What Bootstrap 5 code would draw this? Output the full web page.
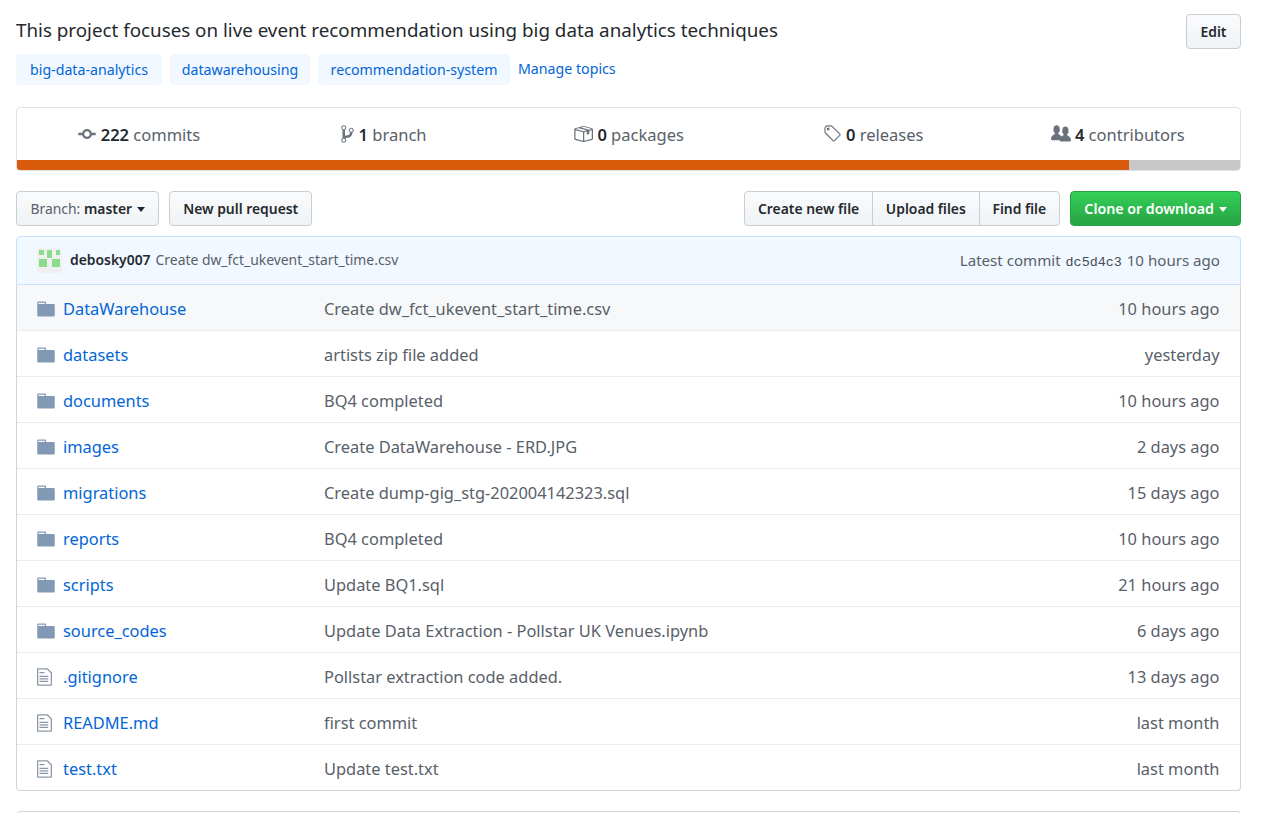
<!DOCTYPE html>
<html lang="en">
<head>
    <meta charset="UTF-8">
    <meta name="viewport" content="width=device-width, initial-scale=1.0">
    <title>Repository</title>
    <link href="https://cdn.jsdelivr.net/npm/bootstrap@5.3.0/dist/css/bootstrap.min.css" rel="stylesheet">
    <style>
        body {
            font-family: "Noto Sans", "Open Sans", sans-serif;
            color: #24292e;
            background: #fff;
            overflow: hidden;
        }
        a { text-decoration: none; color: #0366d6; }
        .repo-wrap { padding: 14px 20px 0 16px; }
        .repo-desc { font-size: 18.8px; line-height: 33px; height: 35px; }
        .gh-btn {
            font-size: 13.9px;
            font-weight: 600;
            line-height: 33px;
            height: 35px;
            padding: 0 13.5px;
            border: 1px solid #c9ccd1;
            border-radius: 4px;
            color: #24292e;
            background: linear-gradient(#fafbfc, #eff3f6);
            white-space: nowrap;
        }
        .gh-btn:hover { color: #24292e; }
        .gh-btn .muted-lbl { font-weight: 400; color: #586069; }
        .gh-pr { margin-left: 10px; padding: 0 13px; }
        .gh-group .gh-btn { border-radius: 0; margin-left: -1px; padding: 0 12.8px; }
        .gh-group .gh-btn:first-child { border-radius: 4px 0 0 4px; margin-left: 0; }
        .gh-group .gh-btn:last-child { border-radius: 0 4px 4px 0; }
        .gh-green {
            color: #fff;
            font-size: 14.2px;
            border-color: #279f43;
            background: linear-gradient(#34d058, #28a745 90%);
            margin-left: 10px;
            padding: 0 13.4px;
        }
        .gh-green:hover { color: #fff; }
        .caret {
            display: inline-block;
            margin-left: 1px;
            vertical-align: 2px;
            border-top: 5px solid currentColor;
            border-left: 4.5px solid transparent;
            border-right: 4.5px solid transparent;
        }
        .topic-row { margin-top: 5px; height: 31px; gap: 8px; }
        .topic-pill {
            display: block;
            font-size: 14.2px;
            line-height: 31px;
            text-align: center;
            background: #f1f8ff;
            border-radius: 4px;
        }
        .pill-a { width: 146px; }
        .pill-b { width: 140px; }
        .pill-c { width: 192px; }
        .manage-link { font-size: 14.2px; line-height: 29px; color: #0366d6; }
        .stats-box {
            margin-top: 22px;
            height: 64px;
            border: 1px solid #dfe2e5;
            border-radius: 4px;
            overflow: hidden;
        }
        .stat-line { height: 52px; }
        .stat-item {
            flex: 1 1 0;
            font-size: 16.5px;
            color: #586069;
            text-align: center;
            line-height: 54px;
            white-space: nowrap;
        }
        .stat-item b { font-weight: 600; color: #24292e; }
        .stat-item svg { fill: #6a737d; vertical-align: -3px; }
        .lang-bar { height: 10px; background: #c8c8c8; }
        .lang-fill { width: 1112px; background: #da5b0b; }
        .action-row { margin-top: 20px; }
        .tease-box {
            margin-top: 10px;
            height: 49px;
            background: #f1f8ff;
            border: 1px solid #c8e1ff;
            border-radius: 4px 4px 0 0;
            padding: 0 20px;
            font-size: 13.9px;
            color: #586069;
        }
        .avatar-box { width: 25px; height: 25px; border-radius: 3px; display: block; }
        .tease-author { font-weight: 600; color: #24292e; margin-left: 8px; margin-right: 5px; padding-bottom: 1px; }
        .tease-msg { padding-bottom: 1px; }
        .tease-meta { font-size: 15.1px; padding-top: 1px; }
        .sha-code { font-family: "Liberation Mono", monospace; font-size: 13.4px; color: #444d56; margin: 0 1px; }
        .file-list {
            border: 1px solid #d1d5da;
            border-top: 0;
            border-radius: 0 0 4px 4px;
        }
        .file-row {
            height: 46px;
            padding: 2px 20.5px 0 20px;
            border-bottom: 1px solid #eaecef;
            font-size: 16.4px;
            color: #586069;
            white-space: nowrap;
        }
        .file-row:last-child { border-bottom: 0; height: 45px; }
        .file-row.is-hot { background: #f6f8fa; }
        .file-icon { width: 26px; flex: none; display: flex; }
        .file-icon .dir-ic { fill: #8299b5; }
        .file-icon .txt-ic { fill: #8a97a8; }
        .file-name { width: 261px; flex: none; padding-top: 2px; }
        .file-msg { flex: 1 1 auto; padding-top: 2px; }
        .file-age { flex: none; padding-top: 2px; }
        .next-box {
            margin-top: 20px;
            height: 30px;
            border: 1px solid #d1d5da;
            border-radius: 4px 4px 0 0;
        }
    </style>
</head>
<body>
    <svg width="0" height="0" class="position-absolute">
        <symbol id="ic-dir" viewBox="0 0 14 16"><path d="M13 4H7V3c0-.66-.31-1-1-1H1c-.55 0-1 .45-1 1v10c0 .55.45 1 1 1h12c.55 0 1-.45 1-1V5c0-.55-.45-1-1-1zM6 4H1V3h5v1z"/></symbol>
        <symbol id="ic-txt" viewBox="0 0 12 16"><path d="M6 5H2V4h4v1zM2 8h7V7H2v1zm0 2h7V9H2v1zm0 2h7v-1H2v1zm10-7.5V14c0 .55-.45 1-1 1H1c-.55 0-1-.45-1-1V2c0-.55.45-1 1-1h7.5L12 4.5zM11 5L8 2H1v12h10V5z"/></symbol>
    </svg>

    <div class="repo-wrap">
        <div class="d-flex justify-content-between">
            <div class="repo-desc">This project focuses on live event recommendation using big data analytics techniques</div>
            <a class="gh-btn" href="#">Edit</a>
        </div>

        <div class="d-flex topic-row">
            <a class="topic-pill pill-a" href="#">big-data-analytics</a>
            <a class="topic-pill pill-b" href="#">datawarehousing</a>
            <a class="topic-pill pill-c" href="#">recommendation-system</a>
            <a class="manage-link" href="#">Manage topics</a>
        </div>

        <div class="stats-box">
            <div class="d-flex stat-line">
                <div class="stat-item">
                    <svg width="18" height="20" viewBox="0 0 14 16"><path d="M10.86 7c-.45-1.72-2-3-3.86-3-1.86 0-3.41 1.28-3.86 3H0v2h3.14c.45 1.72 2 3 3.86 3 1.86 0 3.41-1.28 3.86-3H14V7h-3.14zM7 10.2c-1.22 0-2.2-.98-2.2-2.2 0-1.22.98-2.2 2.2-2.2 1.22 0 2.2.98 2.2 2.2 0 1.22-.98 2.2-2.2 2.2z"/></svg>
                    <b>222</b> commits
                </div>
                <div class="stat-item">
                    <svg width="13" height="20" viewBox="0 0 10 16"><path d="M10 5c0-1.11-.89-2-2-2a1.993 1.993 0 0 0-1 3.72v.3c-.02.52-.23.98-.63 1.38-.4.4-.86.61-1.38.63-.83.02-1.48.16-2 .45V4.72a1.993 1.993 0 0 0-1-3.72C.88 1 0 1.89 0 3a2 2 0 0 0 1 1.72v6.56c-.59.35-1 .99-1 1.72 0 1.11.89 2 2 2 1.11 0 2-.89 2-2 0-.53-.2-1-.53-1.36.09-.06.48-.41.59-.47.25-.11.56-.17.94-.17 1.05-.05 1.95-.45 2.75-1.25S8.95 7.77 9 6.73h-.02C9.59 6.37 10 5.73 10 5zM2 1.8c.66 0 1.2.55 1.2 1.2 0 .65-.55 1.2-1.2 1.2C1.35 4.2.8 3.65.8 3c0-.65.55-1.2 1.2-1.2zm0 12.41c-.66 0-1.2-.55-1.2-1.2 0-.65.55-1.2 1.2-1.2.65 0 1.2.55 1.2 1.2 0 .65-.55 1.2-1.2 1.2zm6-8c-.66 0-1.2-.55-1.2-1.2 0-.65.55-1.2 1.2-1.2.65 0 1.2.55 1.2 1.2 0 .65-.55 1.2-1.2 1.2z"/></svg>
                    <b>1</b> branch
                </div>
                <div class="stat-item">
                    <svg width="20" height="20" viewBox="0 0 16 16"><path d="M1 4.27v7.47c0 .45.3.84.75.97l6.5 1.73c.16.05.34.05.5 0l6.5-1.73c.45-.13.75-.52.75-.97V4.27c0-.45-.3-.84-.75-.97l-6.5-1.74a1.4 1.4 0 0 0-.5 0L1.75 3.3c-.45.13-.75.52-.75.97zm7 9.09l-6-1.59V5l6 1.61v6.75zM2 4l2.5-.67L11 5.06l-2.5.67L2 4zm13 7.77l-6 1.59V6.61l2-.55V8.5l2-.53V5.53L15 5v6.77zm-2-7.24L6.5 2.8l2-.53L15 4l-2 .53z"/></svg>
                    <b>0</b> packages
                </div>
                <div class="stat-item">
                    <svg width="19" height="20" viewBox="0 0 15 16"><path d="M7.73 1.73C7.26 1.26 6.62 1 5.96 1H3.5C2.13 1 1 2.13 1 3.5v2.47c0 .66.27 1.3.73 1.77l6.06 6.06c.39.39 1.02.39 1.41 0l4.59-4.59a.996.996 0 0 0 0-1.41L7.73 1.73zM2.38 7.09c-.31-.3-.47-.7-.47-1.13V3.5c0-.88.72-1.59 1.59-1.59h2.47c.42 0 .83.16 1.13.47l6.14 6.13-4.73 4.73-6.13-6.15zM3.01 3h2v2H3V3h.01z"/></svg>
                    <b>0</b> releases
                </div>
                <div class="stat-item">
                    <svg width="20" height="20" viewBox="0 0 16 16"><path d="M16 12.999c0 .439-.45 1-1 1H7.995c-.539 0-.994-.447-.995-.999H1c-.54 0-1-.561-1-1 0-2.634 3-4 3-4s.229-.409 0-1c-.841-.621-1.058-.59-1-3 .058-2.419 1.367-3 2.5-3s2.442.58 2.5 3c.058 2.41-.159 2.379-1 3-.229.59 0 1 0 1s1.549.711 2.42 2.088C9.196 9.369 10 8.999 10 8.999s.229-.409 0-1c-.841-.62-1.058-.59-1-3 .058-2.419 1.367-3 2.5-3s2.437.581 2.495 3c.059 2.41-.158 2.38-1 3-.229.59 0 1 0 1s3.005 1.366 3.005 4z"/></svg>
                    <b>4</b> contributors
                </div>
            </div>
            <div class="d-flex lang-bar"><div class="lang-fill"></div></div>
        </div>

        <div class="d-flex action-row">
            <a class="gh-btn" href="#"><span class="muted-lbl">Branch:</span> master <span class="caret"></span></a>
            <a class="gh-btn gh-pr" href="#">New pull request</a>
            <div class="d-flex gh-group ms-auto">
                <a class="gh-btn" href="#">Create new file</a>
                <a class="gh-btn" href="#">Upload files</a>
                <a class="gh-btn" href="#">Find file</a>
            </div>
            <a class="gh-btn gh-green" href="#">Clone or download <span class="caret"></span></a>
        </div>

        <div class="d-flex align-items-center tease-box">
            <svg class="avatar-box" viewBox="0 0 25 25" shape-rendering="crispEdges">
                <rect width="25" height="25" fill="#f0f0f0"/>
                <path fill="#8bdb8d" d="M2 2h4.5v5H2zM10 2h5v8h-5zM19 2h4v5h-4zM2 11h8v8H2zM15 11h8v8h-8z"/>
            </svg>
            <a class="tease-author" href="#">debosky007</a>
            <span class="tease-msg">Create dw_fct_ukevent_start_time.csv</span>
            <span class="ms-auto tease-meta">Latest commit <span class="sha-code">dc5d4c3</span> 10 hours ago</span>
        </div>

        <div class="file-list" id="fileList"></div>

        <div class="next-box"></div>
    </div>

    <script src="https://cdn.jsdelivr.net/npm/bootstrap@5.3.0/dist/js/bootstrap.bundle.min.js"></script>
    <script>
        const files = [
            ['dir', 'DataWarehouse', 'Create dw_fct_ukevent_start_time.csv', '10 hours ago'],
            ['dir', 'datasets', 'artists zip file added', 'yesterday'],
            ['dir', 'documents', 'BQ4 completed', '10 hours ago'],
            ['dir', 'images', 'Create DataWarehouse - ERD.JPG', '2 days ago'],
            ['dir', 'migrations', 'Create dump-gig_stg-202004142323.sql', '15 days ago'],
            ['dir', 'reports', 'BQ4 completed', '10 hours ago'],
            ['dir', 'scripts', 'Update BQ1.sql', '21 hours ago'],
            ['dir', 'source_codes', 'Update Data Extraction - Pollstar UK Venues.ipynb', '6 days ago'],
            ['txt', '.gitignore', 'Pollstar extraction code added.', '13 days ago'],
            ['txt', 'README.md', 'first commit', 'last month'],
            ['txt', 'test.txt', 'Update test.txt', 'last month']
        ];
        document.getElementById('fileList').innerHTML = files.map((f, i) => {
            const icon = f[0] === 'dir'
                ? '<svg class="dir-ic" width="18" height="20"><use href="#ic-dir"/></svg>'
                : '<svg class="txt-ic" width="15" height="20"><use href="#ic-txt"/></svg>';
            return `<div class="d-flex align-items-center file-row${i === 0 ? ' is-hot' : ''}">
                <span class="file-icon">${icon}</span>
                <a class="file-name" href="#">${f[1]}</a>
                <span class="file-msg">${f[2]}</span>
                <span class="file-age">${f[3]}</span>
            </div>`;
        }).join('');
    </script>
</body>
</html>
